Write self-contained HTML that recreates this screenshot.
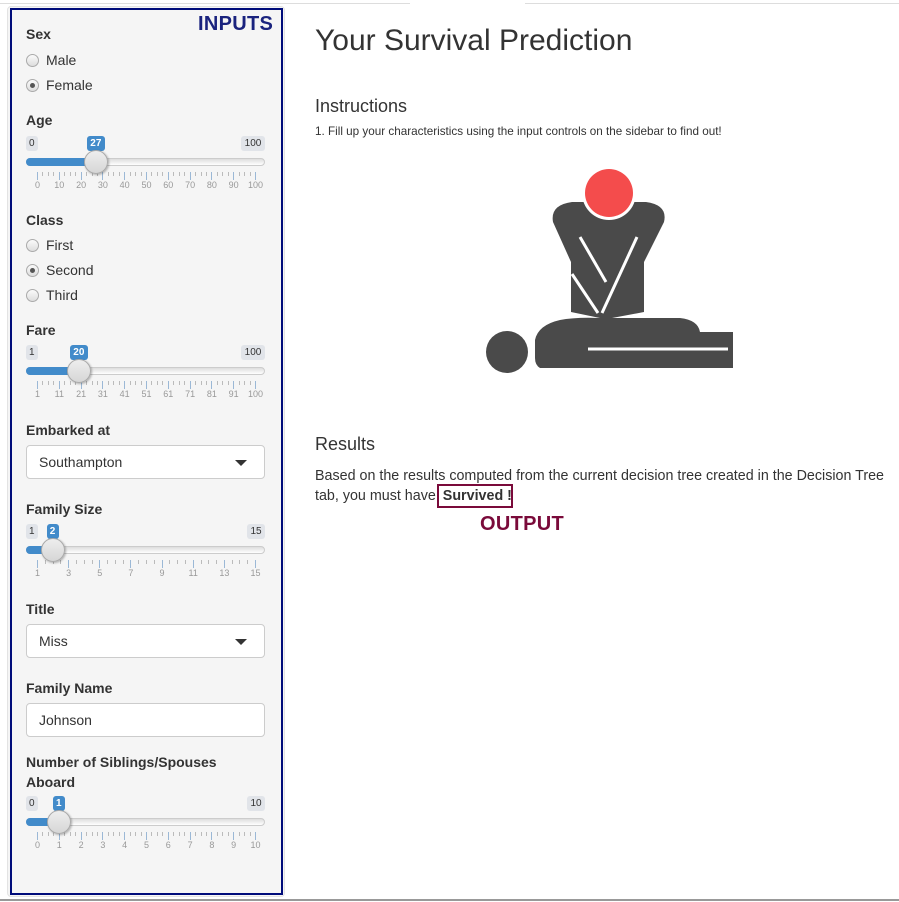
<!DOCTYPE html>
<html><head><meta charset="utf-8"><style>
*{box-sizing:border-box;margin:0;padding:0}
body{width:899px;height:902px;position:relative;background:#fff;font-family:"Liberation Sans",Arial,sans-serif;color:#333;overflow:hidden}
.a{position:absolute;white-space:nowrap}
.lbl{font-weight:bold;font-size:14px;color:#333}
.rad{font-size:14px;color:#333}
.rc{position:absolute;width:13px;height:13px;border-radius:50%;border:1px solid #aaa;background:linear-gradient(#fafafa,#ddd)}
.rc.on::after{content:"";position:absolute;left:3px;top:3px;width:5px;height:5px;border-radius:50%;background:#555}
.sel{position:absolute;left:26px;width:239px;height:34px;background:#fff;border:1px solid #ccc;border-radius:4px;font-size:14px;padding:8px 12px;color:#333}
.sel .car{position:absolute;right:17px;top:14px;width:0;height:0;border-left:6px solid transparent;border-right:6px solid transparent;border-top:6px solid #333}
.badge{position:absolute;font-size:10px;height:15px;line-height:15px;padding:0 3px;border-radius:3px;text-align:center}
.mm{background:#e1e4e9;color:#333}
.val{background:#428bca;color:#fff;font-weight:bold}
.track{position:absolute;left:26px;width:239px;height:8px;border-radius:4px;border:1px solid #ccc;background:linear-gradient(#ddd,#fff)}
.bar{position:absolute;left:26px;height:8px;border-radius:4px 0 0 4px;background:#428bca}
.hdl{position:absolute;width:24px;height:24px;border-radius:50%;border:1px solid #aaa;background:linear-gradient(#eee,#d6d6d6);box-shadow:1px 1px 2px rgba(0,0,0,.3)}
.tk{position:absolute;width:1px;background:#9bb8d6}
.tn{position:absolute;font-size:9px;color:#999;transform:translateX(-50%)}
</style></head><body>
<div class="a" style="left:0;top:3px;width:410px;border-top:1px solid #ddd"></div>
<div class="a" style="left:525px;top:3px;width:374px;border-top:1px solid #ddd"></div>
<div class="a" style="left:0;top:899px;width:899px;border-top:2px solid #999"></div>
<div class="a" style="left:7px;top:6px;width:278px;height:891px;background:#f5f5f5;border:1px solid #e3e3e3;border-radius:4px"></div>
<div class="a" style="left:10px;top:8px;width:273px;height:887px;border:2px solid #000c7a"></div>
<div class="a" style="left:198px;top:13px;font-size:20px;font-weight:bold;color:#1a237e;letter-spacing:.3px">INPUTS</div>

<div class="a lbl" style="left:26px;top:26px">Sex</div>
<div class="rc" style="left:26px;top:54px"></div><div class="a rad" style="left:46px;top:52px">Male</div>
<div class="rc on" style="left:26px;top:79px"></div><div class="a rad" style="left:46px;top:77px">Female</div>
<div class="a lbl" style="left:26px;top:112px">Age</div>
<div class="a lbl" style="left:26px;top:212px">Class</div>
<div class="rc" style="left:26px;top:239px"></div><div class="a rad" style="left:46px;top:237px">First</div>
<div class="rc on" style="left:26px;top:264px"></div><div class="a rad" style="left:46px;top:262px">Second</div>
<div class="rc" style="left:26px;top:289px"></div><div class="a rad" style="left:46px;top:287px">Third</div>
<div class="a lbl" style="left:26px;top:322px">Fare</div>
<div class="a lbl" style="left:26px;top:422px">Embarked at</div>
<div class="sel" style="top:445px">Southampton<span class="car"></span></div>
<div class="a lbl" style="left:26px;top:501px">Family Size</div>
<div class="a lbl" style="left:26px;top:601px">Title</div>
<div class="sel" style="top:624px">Miss<span class="car"></span></div>
<div class="a lbl" style="left:26px;top:680px">Family Name</div>
<div class="sel" style="top:703px">Johnson</div>
<div class="a lbl" style="left:26px;top:752px;line-height:20px">Number of Siblings/Spouses<br>Aboard</div>
<div id="sl"></div>

<div class="a" style="left:315px;top:24px;font-size:30px;color:#333">Your Survival Prediction</div>
<div class="a" style="left:315px;top:96px;font-size:18px;color:#333">Instructions</div>
<div class="a" style="left:315px;top:125px;font-size:11.7px;color:#333">1. Fill up your characteristics using the input controls on the sidebar to find out!</div>
<svg class="a" style="left:470px;top:160px" width="280" height="220" viewBox="470 160 280 220">
<path fill="#4a4a4a" d="M553,222 Q550,205 572,202 L646,202 Q668,205 664,222 L644,262 L644,312 L612,318 L600,318 L571,312 L571,262 Z"/>
<path stroke="#fff" stroke-width="3" fill="none" d="M580,237 L606,282 M637,237 L602,313 M572,274 L598,313"/>
<circle cx="609" cy="193" r="27" fill="#fff"/>
<circle cx="609" cy="193" r="24" fill="#f44c4c"/>
<circle cx="507" cy="352" r="21" fill="#4a4a4a"/>
<path fill="#4a4a4a" d="M535,340 Q538,325 560,320 Q575,317 600,318 L680,318 Q698,320 700,332 L733,332 L733,368 L540,368 Q535,365 535,358 Z"/>
<path stroke="#fff" stroke-width="3" fill="none" d="M588,349 L728,349"/>
</svg>
<div class="a" style="left:315px;top:434px;font-size:18px;color:#333">Results</div>
<div class="a" style="left:315px;top:466px;font-size:14.3px;line-height:20px;color:#333">Based on the results computed from the current decision tree created in the Decision Tree<br>tab, you must have <b style="padding-left:3px">Survived !</b></div>
<div class="a" style="left:437px;top:484px;width:76px;height:24px;border:2px solid #7a0a3a"></div>
<div class="a" style="left:480px;top:513px;font-size:20px;font-weight:bold;color:#7a0a3a;letter-spacing:.3px">OUTPUT</div>
<script>
function slider(T,min,max,val,labels){
 var h='',x0=37,w=218,pos=function(v){return x0+(v-min)/(max-min)*w};
 var hx=pos(val);
 h+='<div class="badge mm" style="left:26px;top:'+T+'px">'+min+'</div>';
 var mx=String(max);h+='<div class="badge mm" style="left:'+(265-(mx.length*6+6))+'px;top:'+T+'px;width:'+(mx.length*6+6)+'px">'+mx+'</div>';
 var vs=String(val),vw=vs.length*6+6;
 h+='<div class="badge val" style="left:'+(hx-vw/2)+'px;top:'+T+'px;width:'+vw+'px">'+vs+'</div>';
 h+='<div class="track" style="top:'+(T+22)+'px"></div>';
 h+='<div class="bar" style="top:'+(T+22)+'px;width:'+(hx-26)+'px"></div>';
 var n=labels.length;
 for(var i=0;i<n;i++){var x=x0+i*w/(n-1);
  h+='<div class="tk" style="left:'+x+'px;top:'+(T+36)+'px;height:8px"></div>';
  h+='<div class="tn" style="left:'+(x+0.5)+'px;top:'+(T+44)+'px">'+labels[i]+'</div>';
  if(i<n-1)for(var j=1;j<4;j++)h+='<div class="tk" style="left:'+(x+j*w/(n-1)/4)+'px;top:'+(T+36)+'px;height:4px;background:#bbb"></div>';}
 h+='<div class="hdl" style="left:'+(hx-12)+'px;top:'+(T+14)+'px"></div>';
 return h;}
var r=function(a,b,s){var o=[];for(var i=a;i<=b;i+=s)o.push(i);return o};
document.getElementById('sl').innerHTML=
 slider(136,0,100,27,r(0,100,10))+
 slider(345,1,100,20,[1,11,21,31,41,51,61,71,81,91,100])+
 slider(524,1,15,2,r(1,15,2))+
 slider(796,0,10,1,r(0,10,1));
</script>
</body></html>
